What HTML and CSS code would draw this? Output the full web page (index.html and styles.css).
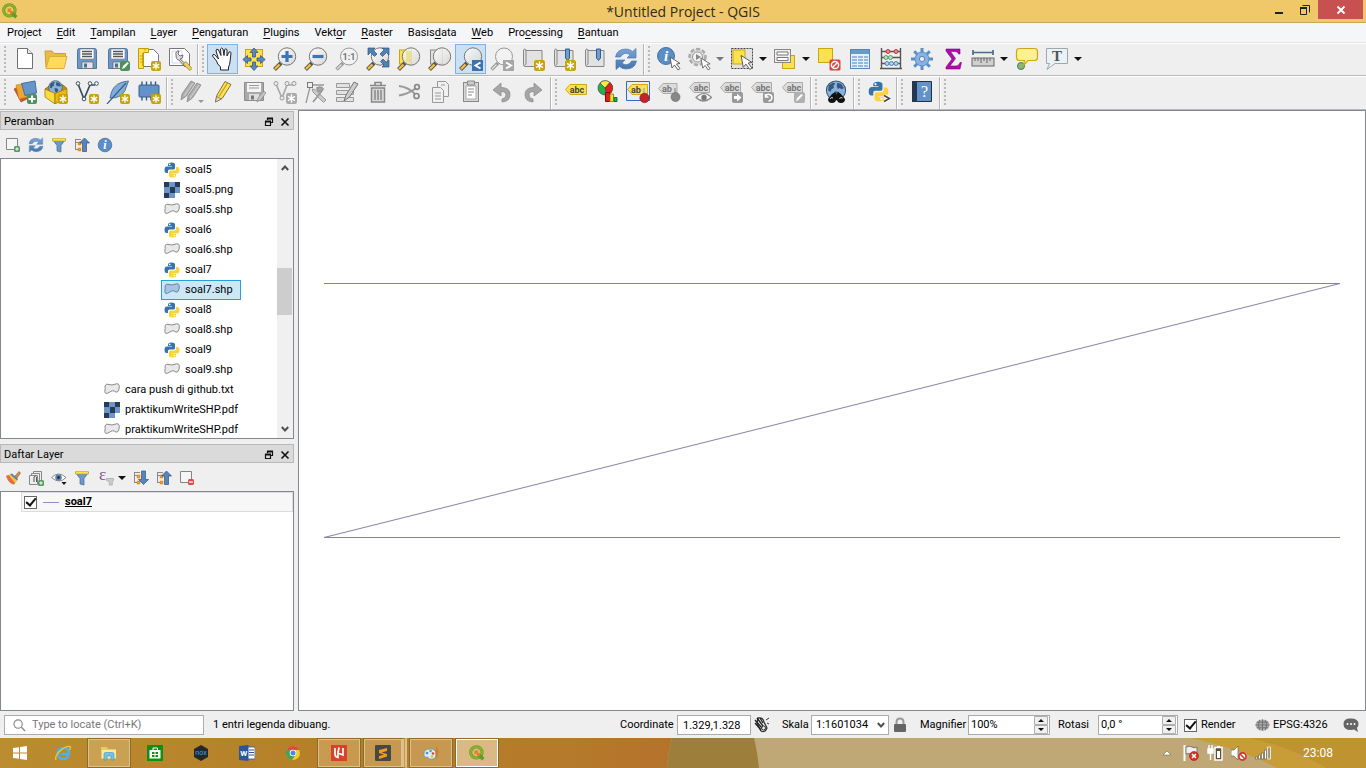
FILE: index.html
```html
<!DOCTYPE html>
<html lang="id">
<head>
<meta charset="utf-8">
<title>*Untitled Project - QGIS</title>
<link rel="stylesheet" href="styles.css">
</head>
<body>
<svg class="paints" aria-hidden="true">
<defs>
<linearGradient id="gGlass" x1="0" y1="0" x2="1" y2="1"><stop offset="0" stop-color="#ffffff"/><stop offset="1" stop-color="#d4d4d0"/></linearGradient>
<linearGradient id="gBlue" x1="0" y1="0" x2="0" y2="1"><stop offset="0" stop-color="#7fa6d3"/><stop offset="1" stop-color="#4274ae"/></linearGradient>
<linearGradient id="gTask" x1="0" y1="0" x2="1" y2="0"><stop offset="0" stop-color="#bb8c30"/><stop offset="0.5" stop-color="#b57f27"/><stop offset="0.85" stop-color="#b57a2b"/><stop offset="1" stop-color="#b5722b"/></linearGradient>
</defs>
</svg>
<svg class="symbols" aria-hidden="true">
<symbol id="star" viewBox="0 0 10 10"><rect width="10" height="10" rx="2" fill="#c8a20a"/><path d="M5 1.200v7.600M1.800 3.100l6.400 3.800M8.200 3.100L1.800 6.900" stroke="#fff" stroke-width="1.300"/></symbol>
<symbol id="starg" viewBox="0 0 10 10"><rect width="10" height="10" rx="2" fill="#a9a9a9"/><path d="M5 1.200v7.600M1.800 3.100l6.400 3.800M8.200 3.100L1.800 6.900" stroke="#fff" stroke-width="1.300"/></symbol>
<symbol id="qgis" viewBox="0 0 16 16"><circle cx="7.400" cy="7.400" r="5.700" fill="none" stroke="#6a9a1f" stroke-width="3"/><circle cx="7.400" cy="7.400" r="5.700" fill="none" stroke="#8dbb2e" stroke-width="1.400"/><path d="M8 8l3 .5 4.500 4.600-2.400 2.400L8.500 11z" fill="#5f9a30"/><path d="M5.600 5.600h4.200L8.500 7l3 3-1.400 1.400-3-3-1.500 1.400z" fill="#ee7c21"/></symbol>
<symbol id="new" viewBox="0 0 24 24"><path d="M4.500 1.500h10l5 5v15h-15z" fill="#fff" stroke="#707070"/><path d="M14.500 1.500v5h5" fill="#e8e8e8" stroke="#707070"/></symbol>
<symbol id="open" viewBox="0 0 24 24"><path d="M2 20.500L1 4h7l2 2.500h11.500v4" fill="#e8bd45" stroke="#c9a02f"/><path d="M2 21.500L5.500 9.500H23L20 21.500z" fill="#fdd95c" stroke="#d9ae3a"/></symbol>
<symbol id="floppy" viewBox="0 0 24 24"><path d="M2.500 3.500q0-2 2-2h15q2 0 2 2v18h-19z" fill="#6d97c9" stroke="#4f779f"/><path d="M5 2h14v10H5z" fill="#fff" stroke="#727d89" stroke-width=".6"/><path d="M7 4.500h10M7 7h10M7 9.500h10" stroke="#555" stroke-width="1.300"/><path d="M7 15h11v6.500H7z" fill="#e4e4e4" stroke="#555" stroke-width=".6"/><path d="M9 16.500h3v4H9z" fill="#4b6f99"/></symbol>
<symbol id="floppyg" viewBox="0 0 24 24"><path d="M2.500 2.500h19v18h-19z" fill="#a9a9a9" stroke="#8c8c8c"/><path d="M5 3h14v9H5z" fill="#f4f4f4"/><path d="M7 5.500h10M7 8h10" stroke="#999"/><path d="M7 14h10v6H7z" fill="#ddd"/><path d="M9 15.500h3v4H9z" fill="#777"/><path d="M15 22l1-4 6-7 2 2-5.500 7z" fill="#c4c4c4" stroke="#888" stroke-width=".7"/></symbol>
<symbol id="saveas" viewBox="0 0 24 24"><use href="#floppy"/><rect x="14" y="14" width="10" height="10" rx="2" fill="#4c9258"/><path d="M16 22l1-3 4.500-4 1.300 1.200L18.500 21z" fill="#fff"/></symbol>
<symbol id="layout" viewBox="0 0 24 24"><path d="M5.500 2.500h11l5 5v12h-16z" fill="#fff" stroke="#767676"/><path d="M1.500 1.500h10v4h-5v16h-5z" fill="#fbe259" stroke="#c59a05"/><path d="M5.500 6v13M3 9h3M3 12h3M3 15h3M8 2v2" stroke="#c59a05" stroke-width=".8"/><use href="#star" x="14" y="14" width="10" height="10"/></symbol>
<symbol id="layman" viewBox="0 0 24 24"><path d="M1.500 1.500h15l5 5v12h-20z" fill="#fff" stroke="#767676"/><path d="M4 4h10v12H4z" fill="#fff" stroke="#c8c8f0" stroke-width=".8"/><path d="M8 8q-1-4 3-4l-1 3 2 2 3-1q0 4-3 4l7 6-2 2-6-7q-3 0-3-5z" fill="#ddd" stroke="#555" stroke-width=".8"/><path d="M15 17l3-2.500 6 7-2 2z" fill="#ecd060" stroke="#9c8020" stroke-width=".8"/></symbol>
<symbol id="hand" viewBox="0 0 24 24"><path d="M9.500 23v-3Q6 17 5.500 14L1.500 9q0-2 2-1.500l4 4.500L5 4q0-2.500 2.300-1.500L10 8.500 9.500 2q1-2 2.500 0l1 6.500.700-6q1.300-1.500 2.300.2L16 9l2-4q1.600-.8 2 .8L19 15q-.3 3-1.500 5v3z" fill="#fff" stroke="#222"/></symbol>
<symbol id="pansel" viewBox="0 0 24 24"><rect x="3.500" y="2.500" width="17" height="17" fill="#fbe24c" stroke="#caa60c"/><g fill="#5c88bd" stroke="#36587f" stroke-width=".8"><path d="M12 1l4 4.500h-2.500V10h-3V5.500H8zM12 23.500l4-4.500h-2.500v-4h-3v4H8zM.800 12.500l4.700-4V11H9v3H5.500v2.500zM23.200 12.500l-4.700-4V11H15v3h3.500v2.500z"/></g></symbol>
<symbol id="glass" viewBox="0 0 24 24"><path d="M1.500 22.500l6.500-6.500" stroke="#555" stroke-width="4"/><path d="M2 22l4.500-4.500" stroke="#f6c12c" stroke-width="2.400"/><circle cx="14" cy="9.500" r="8.700" fill="url(#gGlass)" fill-opacity=".85" stroke="#777"/></symbol>
<symbol id="glassg" viewBox="0 0 24 24"><path d="M1.500 22.500l6.500-6.500" stroke="#999" stroke-width="3.500"/><path d="M2 22l4.500-4.500" stroke="#ddd" stroke-width="1.500"/><circle cx="14" cy="9.500" r="8.500" fill="#f2f2f2" stroke="#999"/></symbol>
<symbol id="zin" viewBox="0 0 24 24"><use href="#glass"/><path d="M14 4v11M8.500 9.500h11" stroke="#3f75b4" stroke-width="3.200"/></symbol>
<symbol id="zout" viewBox="0 0 24 24"><use href="#glass"/><path d="M8.500 9.500h11" stroke="#3f75b4" stroke-width="3.200"/></symbol>
<symbol id="znat" viewBox="0 0 24 24"><use href="#glassg"/><text x="14" y="13" font-size="9" font-weight="bold" text-anchor="middle" fill="#777">1:1</text></symbol>
<symbol id="zfull" viewBox="0 0 24 24"><use href="#glass"/><path d="M2 1h7L7 3l4 4-2.500 2.500-4-4L2 8zM23 1h-7l2 2-4 4 2.500 2.500 4-4L23 8zM23 20h-7l2-2-3.500-3.500L17 12l3.500 3.500 2.500-2.500z" fill="#4f80b8" stroke="#2f537f" stroke-width=".7"/></symbol>
<symbol id="zsel" viewBox="0 0 24 24"><rect x="2.500" y="3" width="12" height="14" fill="#fbe24c" stroke="#caa60c"/><use href="#glass"/><rect x="9" y="4" width="6" height="11" fill="#e8db85" opacity=".7"/></symbol>
<symbol id="zlay" viewBox="0 0 24 24"><rect x="2.500" y="3" width="12" height="14" fill="#e2e2e2" stroke="#888"/><use href="#glass"/></symbol>
<symbol id="zlast" viewBox="0 0 24 24"><use href="#glass"/><rect x="13" y="13" width="11" height="11" fill="#3e71ad"/><path d="M21.500 15.500l-5 3 5 3" fill="none" stroke="#fff" stroke-width="2"/></symbol>
<symbol id="znext" viewBox="0 0 24 24"><use href="#glassg"/><rect x="13" y="13" width="11" height="11" fill="#a6a6a6"/><path d="M16 15.500l5 3-5 3" fill="none" stroke="#fff" stroke-width="2"/></symbol>
<symbol id="map" viewBox="0 0 24 24"><path d="M5 3.500h16v16H4q-1.500 0-1.500-2V4q0-2 1.300-2T5 4v12q0 2-1.500 2" fill="#e2e2e2" stroke="#868686"/></symbol>
<symbol id="mapnew" viewBox="0 0 24 24"><use href="#map"/><use href="#star" x="13" y="13" width="11" height="11"/></symbol>
<symbol id="bmnew" viewBox="0 0 24 24"><use href="#map"/><path d="M13.500 2h4v9l-2 2.500-2-2.500z" fill="#6f9dd0" stroke="#2f5f96"/><use href="#star" x="13" y="13" width="11" height="11"/></symbol>
<symbol id="bm" viewBox="0 0 24 24"><use href="#map"/><path d="M13.500 2h4v9l-2 2.500-2-2.500z" fill="#6f9dd0" stroke="#2f5f96"/></symbol>
<symbol id="refresh" viewBox="0 0 24 24"><path d="M1.500 10Q3 2 12 2q4 0 6.500 2.500L22 1.500V11h-9l3-3q-4-3.500-8 0-1 1-1.500 2zM22.500 14Q21 22 12 22q-4 0-6.500-2.500L2 22.500V13h9l-3 3q4 3.500 8 0 1-1 1.500-2z" fill="url(#gBlue)" stroke="#4a7cb5" stroke-width=".7"/></symbol>
<symbol id="cursor" viewBox="0 0 12 15"><path d="M1 1l2 11 2.500-3 3.500 5 2-1.500L7.500 8l3.500-.6z" fill="#fff" stroke="#555" stroke-width=".9"/></symbol>
<symbol id="info" viewBox="0 0 16 16"><circle cx="8" cy="8" r="6.800" fill="#5b8ec6" stroke="#39679b" stroke-width=".7"/><text x="8" y="12" text-anchor="middle" font-family="Liberation Serif,serif" font-style="italic" font-weight="bold" font-size="12" fill="#fff">i</text></symbol>
<symbol id="ident" viewBox="0 0 24 24"><use href="#info" x="-1" y="-1" width="20" height="20"/><use href="#cursor" x="12" y="9" width="12" height="15"/></symbol>
<symbol id="actiong" viewBox="0 0 24 24"><circle cx="10.500" cy="10" r="8" fill="#d8d8d8" stroke="#aaa" stroke-width="2.500" stroke-dasharray="4 2"/><circle cx="10.500" cy="10" r="5" fill="#f2f2f2" stroke="#999"/><path d="M9 7l5 3-5 3z" fill="#888"/><use href="#cursor" x="13" y="10" width="11" height="14"/></symbol>
<symbol id="select" viewBox="0 0 24 24"><rect x="1.500" y="1.500" width="21" height="20" fill="#e2e2e2" stroke="#444" stroke-dasharray="2 1"/><rect x="3" y="3" width="12" height="14" fill="#fbe24c" stroke="#caa60c"/><use href="#cursor" x="10" y="7" width="13" height="17"/></symbol>
<symbol id="selform" viewBox="0 0 24 24"><rect x="9.500" y="8.500" width="12" height="13" fill="#fbe24c" stroke="#caa60c"/><rect x="1.500" y="2.500" width="16" height="13" fill="#eee" stroke="#888"/><path d="M4 5h11v3H4zM4 10.500h11v3H4z" fill="#fff" stroke="#777"/></symbol>
<symbol id="desel" viewBox="0 0 24 24"><rect x="1.500" y="1.500" width="14" height="14" fill="#fbe24c" stroke="#caa60c"/><rect x="12.500" y="12.500" width="11" height="11" rx="1.500" fill="#dd3f42"/><circle cx="18" cy="18" r="3.600" fill="none" stroke="#fff" stroke-width="1.500"/><path d="M15.500 20.500l5-5" stroke="#fff" stroke-width="1.500"/></symbol>
<symbol id="table" viewBox="0 0 24 24"><rect x="2.500" y="2.500" width="19" height="19" fill="#e6f0fa" stroke="#5585be"/><path d="M3 3h18v4H3z" fill="#6898cf"/><path d="M4 10h5M4 13h5M4 16h5M4 19h5M10 10h5M10 13h5M10 16h5M10 19h5M16 10h4M16 13h4M16 16h4M16 19h4" stroke="#7ba5d6" stroke-width="1.400"/></symbol>
<symbol id="abacus" viewBox="0 0 24 24"><path d="M2.500 1v21M21.500 1v21M2 4.500h20M2 10.500h20M2 16.500h20M1 21.500h22" stroke="#555" stroke-width="1.400"/><g fill="#e28989" stroke="#c03636"><circle cx="9" cy="4.500" r="2"/><circle cx="17" cy="4.500" r="2"/></g><g fill="#b9e0c2" stroke="#55a068"><circle cx="7" cy="10.500" r="2"/><circle cx="11.500" cy="10.500" r="2"/></g><g fill="#b5d5ec" stroke="#4a82b5"><circle cx="8" cy="16.500" r="2"/><circle cx="12.500" cy="16.500" r="2"/><circle cx="17" cy="16.500" r="2"/></g></symbol>
<symbol id="gear" viewBox="0 0 24 24"><g stroke="#5b8fca" stroke-width="3"><path d="M12 1v22M1 12h22M4.200 4.200l15.600 15.600M19.800 4.200L4.200 19.800"/></g><circle cx="12" cy="12" r="7" fill="#8ab2e0" stroke="#5b8fca"/><circle cx="12" cy="12" r="2.600" fill="#efefef" stroke="#4f85c4"/></symbol>
<symbol id="sigma" viewBox="0 0 24 24"><path d="M5 2h14v5h-1.500Q17 4.500 14 4.500H9.500l5 7-5.500 7.500h6q3 0 4-3.500h1.500L19 22H5v-2l6-8L5 4z" fill="#ab0eab" stroke="#7d087d" stroke-width=".6"/></symbol>
<symbol id="measure" viewBox="0 0 24 24"><path d="M2 5.500h20M2 3v5M22 3v5" stroke="#48688f" stroke-width="1.700"/><rect x="1" y="11" width="22" height="8" fill="#d0d0d0" stroke="#666"/><path d="M4 11v3M7 11v3M10 11v5M13 11v3M16 11v5M19 11v3" stroke="#666"/></symbol>
<symbol id="tip" viewBox="0 0 24 24"><circle cx="6" cy="19" r="3.500" fill="#7eb98b" stroke="#4a7e57"/><path d="M4.500 1.500h15q3 0 3 3v6q0 3-3 3H13L8 19l1.500-5.500h-5q-3 0-3-3v-6q0-3 3-3z" fill="#fcf091" stroke="#d0a712" stroke-width="1.200"/></symbol>
<symbol id="anno" viewBox="0 0 24 24"><path d="M1.500 1.500h21v15H10l-8 6 2.500-6h-3z" fill="#eaf2f7" stroke="#9da7ac"/><text x="12" y="14" text-anchor="middle" font-family="Liberation Serif,serif" font-weight="bold" font-size="15" fill="#555">T</text></symbol>
<symbol id="layers" viewBox="0 0 24 24"><path d="M1 9l9-5 8 13-10 5z" fill="#c9562a" stroke="#9a431f" stroke-width=".6"/><path d="M3 5l12-2 3 13-12 3z" fill="#eda72e" stroke="#c98717" stroke-width=".6"/><path d="M8.500 3.500L22 1l1.500 12L12 15.500z" fill="#6695cb" stroke="#456f9f"/><rect x="14" y="14" width="10" height="10" rx="2" fill="#4c9258"/><path d="M19 15.500v7M15.500 19h7" stroke="#fff" stroke-width="2"/></symbol>
<symbol id="globe" viewBox="0 0 16 16"><circle cx="8" cy="8" r="7.300" fill="#8cb2da" stroke="#34567f" stroke-width=".8"/><path d="M2.500 4l3-2 2 .5-1.500 2 .5 1.500-2 1-.5 2-2-1zM9 2l3 1 2 3-1.500 1-2-1-1 1-1-2.500zM7 8.500l3 .5 1 2-2 3-1.500-2z" fill="#35587f"/></symbol>
<symbol id="geopkg" viewBox="0 0 24 24"><path d="M1 9l6-4h12l4 3.500L12 14z" fill="#c4950a" stroke="#8f6f0e"/><use href="#globe" x="4" y="0" width="15" height="15"/><path d="M1 9l10 4.500V24L1 17z" fill="#fbdc3d" stroke="#9a7a12" stroke-width=".8"/><path d="M11 13.500L23 8.500v9L11 24z" fill="#edb70d" stroke="#9a7a12" stroke-width=".8"/><use href="#star" x="14" y="14" width="10" height="10"/></symbol>
<symbol id="vec" viewBox="0 0 24 24"><path d="M3 4l6 15 6-14h5" fill="none" stroke="#3b4c60" stroke-width="1.700"/><g fill="#fff" stroke="#3b4c60"><circle cx="3" cy="3.500" r="1.800"/><circle cx="9" cy="19" r="1.800"/><circle cx="15" cy="3.500" r="1.800"/><circle cx="21.500" cy="3.500" r="1.800"/></g></symbol>
<symbol id="newvec" viewBox="0 0 24 24"><use href="#vec"/><use href="#star" x="14" y="14" width="10" height="10"/></symbol>
<symbol id="feather" viewBox="0 0 24 24"><path d="M22.500 1Q9 2 5.500 12L4 18q11 .5 15-7.500z" fill="#83acd9" stroke="#34618f" stroke-width=".8"/><path d="M1 24L20 3" stroke="#34618f" stroke-width="1.200"/></symbol>
<symbol id="spatial" viewBox="0 0 24 24"><use href="#feather"/><use href="#star" x="14" y="14" width="10" height="10"/></symbol>
<symbol id="chip" viewBox="0 0 24 24"><path d="M5 1.500v19M9.500 1.500v19M14 1.500v19M18.500 1.500v19" stroke="#335a8c" stroke-width="1.400"/><rect x="2" y="5" width="20" height="12" rx="1" fill="#6391c9" stroke="#395f90"/><use href="#star" x="14" y="14" width="10" height="10"/></symbol>
<symbol id="pensg" viewBox="0 0 24 24"><g fill="#ababab" stroke="#8a8a8a" stroke-width=".8"><path d="M1 20l1-6L11 1l4 2-8.500 13z"/><path d="M7 22l1-6L17 3l4 2-8.500 13z"/></g><path d="M4 16l9-13M10 18l9-13" stroke="#ccc" stroke-width="1.300"/><path d="M18 20h6l-3 3z" fill="#999"/></symbol>
<symbol id="pencil" viewBox="0 0 24 24"><path d="M4.500 22l1.500-7L14 1.500l6 3L11.500 18z" fill="#fbe259" stroke="#84742a"/><path d="M8 16.500L16.500 3" stroke="#c6a323" stroke-width="1.400"/><path d="M4.500 22l1-5.500 5 2.500z" fill="#eed7aa" stroke="#666" stroke-width=".7"/></symbol>
<symbol id="vecg" viewBox="0 0 24 24"><path d="M3 4l6 14 5-13h6" fill="none" stroke="#aaa" stroke-width="1.700"/><g fill="#eee" stroke="#999"><circle cx="3" cy="3.500" r="2"/><circle cx="9" cy="18" r="2"/><circle cx="14" cy="3.500" r="2"/><circle cx="21" cy="3.500" r="2"/></g><use href="#starg" x="13" y="13" width="11" height="11"/></symbol>
<symbol id="vertg" viewBox="0 0 24 24"><path d="M6 7L2 23M8 5h12" stroke="#999" stroke-width="1.300"/><rect x="3.500" y="2.500" width="5" height="5" fill="#eee" stroke="#777"/><path d="M8 9l3 .5L22 20l-2.500 2.500L9 12z" fill="#ccc" stroke="#999"/><path d="M13 8q4-2 6 1l-2 3-3-1zM17 12L9 22" fill="#aaa" stroke="#999" stroke-width="1.800"/></symbol>
<symbol id="multig" viewBox="0 0 24 24"><g fill="#e2e2e2" stroke="#999"><path d="M1.500 3.500h13v4h-13zM1.500 10.500h17v4h-17zM1.500 17.500h17v4h-17z"/></g><path d="M9 21l2-6 8-13 4 2-8.500 13z" fill="#ccc" stroke="#777"/></symbol>
<symbol id="trash" viewBox="0 0 24 24"><path d="M4 5.500h16M9 5V2.500h6V5" fill="none" stroke="#888" stroke-width="1.600"/><path d="M5.500 8h13v14h-13z" fill="#d8d8d8" stroke="#888" stroke-width="1.500"/><path d="M9 10v10M12 10v10M15 10v10" stroke="#888" stroke-width="1.500"/></symbol>
<symbol id="cut" viewBox="0 0 24 24"><path d="M2 6q9 1 16 8M2 15.500Q11 14 18.500 8.500" fill="none" stroke="#999" stroke-width="2"/><g fill="none" stroke="#888" stroke-width="1.700"><circle cx="20" cy="7" r="2.300"/><circle cx="19.500" cy="16" r="2.500"/></g></symbol>
<symbol id="copy" viewBox="0 0 24 24"><g fill="#f0f0f0" stroke="#999"><path d="M9.500 1.500h8l3 3v12h-11z"/><path d="M4.500 7.500h8l3 3v12h-11z"/></g><path d="M7 13h6M7 16h6M7 19h6M13 5h4" stroke="#999"/></symbol>
<symbol id="paste" viewBox="0 0 24 24"><rect x="4.500" y="2.500" width="15" height="19" fill="#d6d6d6" stroke="#888"/><path d="M7 6h10v13H7z" fill="#fff" stroke="#aaa"/><path d="M8.500 1h7v4h-7z" fill="#ccc" stroke="#888"/><path d="M9 9h6M9 12h6M9 15h4" stroke="#888"/></symbol>
<symbol id="undo" viewBox="0 0 24 24"><path d="M3 10l8-7v4.500q9 0 9 7T12 22v-3q4-.5 4-4t-5-3.500V16z" fill="#a6a6a6" stroke="#8e8e8e" stroke-width=".8"/></symbol>
<symbol id="redo" viewBox="0 0 24 24"><path d="M21 10l-8-7v4.500q-9 0-9 7T12 22v-3q-4-.5-4-4t5-3.500V16z" fill="#a6a6a6" stroke="#8e8e8e" stroke-width=".8"/></symbol>
<symbol id="tag" viewBox="0 0 24 24"><path d="M1.500 9.500L6 4.500h16.500v10H6z" fill="#fbe24c" stroke="#d4a70e"/><text x="13" y="12.500" text-anchor="middle" font-size="9" font-weight="bold" fill="#444">abc</text></symbol>
<symbol id="tagg" viewBox="0 0 24 24"><path d="M1.500 7.500L6 2.500h15.500v10H6z" fill="#dcdcdc" stroke="#aaa"/><text x="13" y="10.500" text-anchor="middle" font-size="9" font-weight="bold" fill="#777">abc</text></symbol>
<symbol id="diag" viewBox="0 0 24 24"><circle cx="10" cy="8" r="7" fill="#25b04c" stroke="#454545" stroke-width=".7"/><path d="M10 8L5 3a7 7 0 0 1 10-.5z" fill="#f9ed3b" stroke="#454545" stroke-width=".7"/><path d="M10 8l5-5.500A7 7 0 0 1 12 15z" fill="#e01f1f" stroke="#454545" stroke-width=".7"/><path d="M10.500 12.500h4v9h-4z" fill="#e01f1f" stroke="#900"/><path d="M15 14h3.500v7.500H15z" fill="#f9dd3b" stroke="#a80"/><path d="M19 17.500h3v4h-3z" fill="#25b04c" stroke="#073"/></symbol>
<symbol id="pinl" viewBox="0 0 24 24"><path d="M.500 1.500h23v19H.500z" fill="#e9eef5" stroke="#2c6bd0"/><path d="M1.500 9.500L6 4.500h15.500v10H6z" fill="#fbe24c" stroke="#d4a70e"/><text x="10" y="12.500" text-anchor="middle" font-size="9" font-weight="bold" fill="#444">ab</text><path d="M18 8v9" stroke="#b9b9b9" stroke-width="2"/><circle cx="18.500" cy="18" r="4.700" fill="#c22525" stroke="#8b1212" stroke-width=".6"/></symbol>
<symbol id="ping" viewBox="0 0 24 24"><path d="M1.500 8.500L6 3.500h14v10H6z" fill="#dcdcdc" stroke="#aaa"/><text x="10" y="11.500" text-anchor="middle" font-size="9" font-weight="bold" fill="#777">ab</text><path d="M18 8v9" stroke="#aaa" stroke-width="2"/><circle cx="18.500" cy="17" r="4.500" fill="#888" stroke="#666" stroke-width=".6"/></symbol>
<symbol id="eyeg" viewBox="0 0 24 24"><use href="#tagg"/><path d="M8 17.500q8-8 15.500 0-8 7-15.500 0z" fill="#f4f4f4" stroke="#888" stroke-width="1.200"/><circle cx="16" cy="17.500" r="2.700" fill="#777"/></symbol>
<symbol id="moveg" viewBox="0 0 24 24"><use href="#tagg"/><rect x="13" y="12" width="11" height="11" rx="2" fill="#999"/><path d="M15 16h3v-2.500l4.500 4-4.500 4V19h-3z" fill="#fff"/></symbol>
<symbol id="rotg" viewBox="0 0 24 24"><use href="#tagg"/><rect x="13" y="12" width="11" height="11" rx="2" fill="#999"/><path d="M18.500 21a3.300 3.300 0 1 0-3-4.500M15.500 14v3h3" fill="none" stroke="#fff" stroke-width="1.500"/></symbol>
<symbol id="editg" viewBox="0 0 24 24"><use href="#tagg"/><rect x="13" y="12" width="11" height="11" rx="2" fill="#b0b0b0"/><path d="M15 21l1-3 4.500-4 1.300 1.200L17.500 20z" fill="#fff"/></symbol>
<symbol id="find" viewBox="0 0 24 24"><use href="#globe" x="0" y="0" width="24" height="21"/><path d="M8 14l3-2 1.500 3L14 12l3 2 4 5q0 4-4 4-3.500 0-4-3h-1q-.5 3-4 3-4 0-4-4z" fill="#111"/><path d="M6 19a2 2 0 0 1 3-1M15.500 19a2 2 0 0 1 3-1" stroke="#ddd" fill="none"/></symbol>
<symbol id="py" viewBox="0 0 16 16"><path d="M4 4V2.500Q4 .500 7.500.500T11 2.500V6Q11 7.500 9.500 7.500h-4Q4 7.500 4 9v2H2.500Q.500 11 .500 7.800T3 4.500h5V4z" fill="#3674a8"/><path d="M12 12v1.500q0 2-3.500 2T5 13.500V10q0-1.500 1.500-1.500h4Q12 8.500 12 7V5h1.500q2 0 2 3.200T13 11.500H8v.5z" fill="#fcd33c"/><circle cx="5.700" cy="2.400" r=".8" fill="#fff"/><circle cx="10.200" cy="13.600" r=".8" fill="#fff"/></symbol>
<symbol id="pycon" viewBox="0 0 24 24"><use href="#py" x="1" y="1" width="21" height="21"/><path d="M17 15.500l5.500 3-5.500 3" fill="none" stroke="#fff" stroke-width="3"/><path d="M17 15.500l5.500 3-5.500 3" fill="none" stroke="#444" stroke-width="1.500"/></symbol>
<symbol id="help" viewBox="0 0 24 24"><path d="M2.500 1.500h19v20h-19z" fill="#6391c9" stroke="#25303d"/><path d="M2 1h5v21H2z" fill="#25384f"/><text x="14.500" y="17" text-anchor="middle" font-family="Liberation Serif,serif" font-size="16" fill="#fff">?</text></symbol>
<symbol id="addl" viewBox="0 0 16 16"><path d="M1.500 1.500h11v11h-11z" fill="#f6f6f6" stroke="#858585"/><rect x="9" y="9" width="6" height="6" rx="1.500" fill="#579a64"/><path d="M12 10.300v3.400M10.300 12h3.400" stroke="#fff"/></symbol>
<symbol id="reml" viewBox="0 0 16 16"><path d="M1.500 1.500h11v11h-11z" fill="#f6f6f6" stroke="#858585"/><rect x="9" y="9" width="6" height="6" rx="1.500" fill="#e8484a"/><path d="M10 12h4" stroke="#fff" stroke-width="1.300"/></symbol>
<symbol id="funnel" viewBox="0 0 16 16"><path d="M1.500 2.500h13l-4.500 6V15l-4-1V8.500z" fill="#6d98c9" stroke="#426c9d" stroke-width=".7"/><path d="M1.500 1.500h13v2.500h-13z" fill="#fbe24c" stroke="#bd9d16" stroke-width=".6"/></symbol>
<symbol id="treeb" viewBox="0 0 16 16"><path d="M1.500 2v11M1.500 5.500h4M1.500 12.500h4" stroke="#888" fill="none"/><path d="M1 2.500h6" stroke="#888"/><path d="M4.500 5.500h2v2h-2zM4.500 11.500h2v2h-2z" fill="#fff" stroke="#e98b17" stroke-width="1.400"/></symbol>
<symbol id="collapse" viewBox="0 0 16 16"><use href="#treeb"/><path d="M10.500 1l5 5h-3v8.500h-4V6h-3z" fill="#5685bc" stroke="#2d5482" stroke-width=".7"/></symbol>
<symbol id="expand" viewBox="0 0 16 16"><use href="#treeb"/><path d="M10.500 14.500l5-5h-3V1h-4v8.500h-3z" fill="#5685bc" stroke="#2d5482" stroke-width=".7"/></symbol>
<symbol id="brush" viewBox="0 0 16 16"><path d="M1 6l6-2.500 6 5.500-3.500 5.500Q5 15 1 6z" fill="#f0c53b"/><path d="M1 6l2.500-1 6.500 8-1 1.500Q4 14 1 6z" fill="#e46a48"/><path d="M5 4.300L7 3.500l6 5.500-1 1.500z" fill="#5685bc"/><path d="M10 6l4-4.500 1.500 1.500L12 8z" fill="#cb8b4f" stroke="#9a5b24" stroke-width=".6"/></symbol>
<symbol id="group" viewBox="0 0 16 16"><g fill="#eee" stroke="#888"><path d="M5.500 1.500h8v10h-8z"/><path d="M3.500 3.500h8v10h-8z"/><path d="M1.500 5.500h8v9h-8z"/></g><path d="M6 12V7q1.500-2 2.500 0v5" fill="none" stroke="#555"/><rect x="10" y="10" width="6" height="6" rx="1.500" fill="#579a64"/><path d="M13 11.300v3.400M11.300 13h3.400" stroke="#fff"/></symbol>
<symbol id="eye" viewBox="0 0 16 16"><path d="M.500 7.500q7-7 14.500 0-7 7-14.500 0z" fill="#fff" stroke="#8c8c8c"/><circle cx="7.500" cy="7.500" r="3.300" fill="#5a82ad"/><circle cx="7.500" cy="7.500" r="1.300" fill="#223"/><path d="M10.500 12h5L13 15z" fill="#111"/></symbol>
<symbol id="epsilon" viewBox="0 0 16 16"><text x="4.500" y="10" text-anchor="middle" font-size="17" font-family="Liberation Serif,serif" fill="#82508c">ε</text><path d="M8.500 8.500h7v2l-1.200 1V15h-3v-3.500l-2.800-1z" fill="#ccc" stroke="#aaa" stroke-width=".8"/></symbol>
<symbol id="raster" viewBox="0 0 16 16"><path d="M0 0h16v16H0z" fill="#6d95c7"/><path d="M0 0h5v5H0zM11 0h5v5h-5zM6 5h5v6H6zM0 11h5v5H0z" fill="#293b54"/><path d="M11 11h5v5h-5z" fill="#fff"/></symbol>
<symbol id="poly" viewBox="0 0 16 16"><path d="M1 4q1-3 4-1.500 3 1.200 6-.3 4-1.500 4.300 2Q15.500 7 14 9.500q-2 1.500-3.500-.3-2-1.500-5 1Q1 13 .800 9.500 1.500 6.500 1 4z" fill="#e9e9e9" stroke="#8a8a8a"/></symbol>
<symbol id="polys" viewBox="0 0 16 16"><path d="M1 4q1-3 4-1.500 3 1.200 6-.3 4-1.500 4.300 2Q15.500 7 14 9.500q-2 1.500-3.500-.3-2-1.500-5 1Q1 13 .800 9.500 1.500 6.500 1 4z" fill="#a3c4e3" stroke="#6484a8"/></symbol>
<symbol id="float" viewBox="0 0 10 10"><path d="M3.500 3V1.500h5v4H7M1.500 4.500h5v4h-5z" fill="none" stroke="#111" stroke-width="1.200"/><path d="M3 1.500h6M1 4.500h6" stroke="#111" stroke-width="1.800"/></symbol>
<symbol id="close" viewBox="0 0 10 10"><path d="M1.500 1.500l7 7M8.500 1.500l-7 7" stroke="#111" stroke-width="1.600"/></symbol>
<symbol id="up" viewBox="0 0 8 8"><path d="M.800 6L4 2.500 7.200 6" fill="none" stroke="#505050" stroke-width="2"/></symbol>
<symbol id="down" viewBox="0 0 8 8"><path d="M.800 2L4 5.500 7.200 2" fill="none" stroke="#505050" stroke-width="2"/></symbol>
<symbol id="spin" viewBox="0 0 14 18"><path d="M.500.500h13v8H.500zM.500 9.500h13v8H.500z" fill="#f0f0f0" stroke="#b0b0b0"/><path d="M4 6h6L7 3zM4 12h6l-3 3z" fill="#111"/></symbol>
</svg>

<header class="titlebar">
  <svg class="i16"><use href="#qgis"/></svg>
  <h1>*Untitled Project - QGIS</h1>
  <div class="winbtns">
    <button class="wb" aria-label="Minimize"><svg viewBox="0 0 10 10"><path d="M1 8h8" stroke="#222" stroke-width="2"/></svg></button>
    <button class="wb" aria-label="Restore"><svg viewBox="0 0 10 10"><path d="M2.500.500h7v7M.500 3.500h6v6h-6z" fill="none" stroke="#222"/><path d="M0 3h7" stroke="#222" stroke-width="2"/></svg></button>
    <button class="wb wclose" aria-label="Close"><svg viewBox="0 0 10 10"><path d="M1.500 1.500l7 7M8.500 1.500l-7 7" stroke="#fff" stroke-width="1.800"/></svg></button>
  </div>
</header>
<nav class="menubar">
  <button>Pro<u>j</u>ect</button><button><u>E</u>dit</button><button><u>T</u>ampilan</button><button><u>L</u>ayer</button><button><u>P</u>engaturan</button><button><u>P</u>lugins</button><button>Vekt<u>o</u>r</button><button><u>R</u>aster</button><button>Basis<u>d</u>ata</button><button><u>W</u>eb</button><button>Pro<u>c</u>essing</button><button><u>B</u>antuan</button>
</nav>
<div class="toolrow">
  <div class="toolbar">
    <button aria-label="New"><svg><use href="#new"/></svg></button><button aria-label="Open"><svg><use href="#open"/></svg></button><button aria-label="Save"><svg><use href="#floppy"/></svg></button><button aria-label="Save as"><svg><use href="#saveas"/></svg></button><button aria-label="New layout"><svg><use href="#layout"/></svg></button><button aria-label="Layout manager"><svg><use href="#layman"/></svg></button>
  </div>
  <div class="toolbar">
    <button class="on" aria-label="Pan"><svg><use href="#hand"/></svg></button><button aria-label="Pan to selection"><svg><use href="#pansel"/></svg></button><button aria-label="Zoom in"><svg><use href="#zin"/></svg></button><button aria-label="Zoom out"><svg><use href="#zout"/></svg></button><button aria-label="Native resolution"><svg><use href="#znat"/></svg></button><button aria-label="Zoom full"><svg><use href="#zfull"/></svg></button><button aria-label="Zoom to selection"><svg><use href="#zsel"/></svg></button><button aria-label="Zoom to layer"><svg><use href="#zlay"/></svg></button><button class="on" aria-label="Zoom last"><svg><use href="#zlast"/></svg></button><button aria-label="Zoom next"><svg><use href="#znext"/></svg></button><button aria-label="New map view"><svg><use href="#mapnew"/></svg></button><button aria-label="New bookmark"><svg><use href="#bmnew"/></svg></button><button aria-label="Bookmarks"><svg><use href="#bm"/></svg></button><button aria-label="Refresh"><svg><use href="#refresh"/></svg></button>
  </div>
  <div class="toolbar last">
    <button aria-label="Identify"><svg><use href="#ident"/></svg></button><button class="drop dim" aria-label="Action"><svg><use href="#actiong"/></svg></button><button class="drop" aria-label="Select"><svg><use href="#select"/></svg></button><button class="drop" aria-label="Select by form"><svg><use href="#selform"/></svg></button><button aria-label="Deselect"><svg><use href="#desel"/></svg></button><button aria-label="Attribute table"><svg><use href="#table"/></svg></button><button aria-label="Field calculator"><svg><use href="#abacus"/></svg></button><button aria-label="Toolbox"><svg><use href="#gear"/></svg></button><button aria-label="Statistics"><svg><use href="#sigma"/></svg></button><button class="drop" aria-label="Measure"><svg><use href="#measure"/></svg></button><button aria-label="Map tips"><svg><use href="#tip"/></svg></button><button class="drop" aria-label="Annotation"><svg><use href="#anno"/></svg></button>
  </div>
</div>
<div class="toolrow">
  <div class="toolbar">
    <button aria-label="Data source"><svg><use href="#layers"/></svg></button><button aria-label="New GeoPackage"><svg><use href="#geopkg"/></svg></button><button aria-label="New shapefile"><svg><use href="#newvec"/></svg></button><button aria-label="New SpatiaLite"><svg><use href="#spatial"/></svg></button><button aria-label="New scratch layer"><svg><use href="#chip"/></svg></button>
  </div>
  <div class="toolbar">
    <button aria-label="Current edits"><svg><use href="#pensg"/></svg></button><button aria-label="Toggle editing"><svg><use href="#pencil"/></svg></button><button aria-label="Save edits"><svg><use href="#floppyg"/></svg></button><button aria-label="Add feature"><svg><use href="#vecg"/></svg></button><button aria-label="Vertex tool"><svg><use href="#vertg"/></svg></button><button aria-label="Modify attributes"><svg><use href="#multig"/></svg></button><button aria-label="Delete"><svg><use href="#trash"/></svg></button><button aria-label="Cut"><svg><use href="#cut"/></svg></button><button aria-label="Copy"><svg><use href="#copy"/></svg></button><button aria-label="Paste"><svg><use href="#paste"/></svg></button><button aria-label="Undo"><svg><use href="#undo"/></svg></button><button aria-label="Redo"><svg><use href="#redo"/></svg></button>
  </div>
  <div class="toolbar">
    <button aria-label="Labels"><svg><use href="#tag"/></svg></button><button aria-label="Diagrams"><svg><use href="#diag"/></svg></button><button aria-label="Highlight pinned"><svg><use href="#pinl"/></svg></button><button aria-label="Pin labels"><svg><use href="#ping"/></svg></button><button aria-label="Show labels"><svg><use href="#eyeg"/></svg></button><button aria-label="Move label"><svg><use href="#moveg"/></svg></button><button aria-label="Rotate label"><svg><use href="#rotg"/></svg></button><button aria-label="Change label"><svg><use href="#editg"/></svg></button>
  </div>
  <div class="toolbar"><button aria-label="MetaSearch"><svg><use href="#find"/></svg></button></div>
  <div class="toolbar"><button aria-label="Python console"><svg><use href="#pycon"/></svg></button></div>
  <div class="toolbar"><button aria-label="Help"><svg><use href="#help"/></svg></button></div>
  <div class="toolbar last"></div>
</div>

<main class="work">
  <div class="docks">
    <section class="dock browser">
      <h2>Peramban<button aria-label="Float"><svg><use href="#float"/></svg></button><button aria-label="Close"><svg><use href="#close"/></svg></button></h2>
      <div class="docktools">
        <button aria-label="Add layer"><svg><use href="#addl"/></svg></button><button aria-label="Refresh"><svg><use href="#refresh"/></svg></button><button aria-label="Filter"><svg><use href="#funnel"/></svg></button><button aria-label="Collapse all"><svg><use href="#collapse"/></svg></button><button aria-label="Properties"><svg><use href="#info"/></svg></button>
      </div>
      <div class="treebox">
        <ul class="tree">
          <li class="deep"><span><svg><use href="#py"/></svg>soal5</span></li>
          <li class="deep"><span><svg><use href="#raster"/></svg>soal5.png</span></li>
          <li class="deep"><span><svg><use href="#poly"/></svg>soal5.shp</span></li>
          <li class="deep"><span><svg><use href="#py"/></svg>soal6</span></li>
          <li class="deep"><span><svg><use href="#poly"/></svg>soal6.shp</span></li>
          <li class="deep"><span><svg><use href="#py"/></svg>soal7</span></li>
          <li class="deep"><span class="sel"><svg><use href="#polys"/></svg>soal7.shp</span></li>
          <li class="deep"><span><svg><use href="#py"/></svg>soal8</span></li>
          <li class="deep"><span><svg><use href="#poly"/></svg>soal8.shp</span></li>
          <li class="deep"><span><svg><use href="#py"/></svg>soal9</span></li>
          <li class="deep"><span><svg><use href="#poly"/></svg>soal9.shp</span></li>
          <li><span><svg><use href="#poly"/></svg>cara push di github.txt</span></li>
          <li><span><svg><use href="#raster"/></svg>praktikumWriteSHP.pdf</span></li>
          <li><span><svg><use href="#poly"/></svg>praktikumWriteSHP.pdf</span></li>
        </ul>
        <div class="scroll">
          <svg><use href="#up"/></svg><div class="track"><div class="thumb"></div></div><svg><use href="#down"/></svg>
        </div>
      </div>
    </section>
    <section class="dock legend">
      <h2>Daftar Layer<button aria-label="Float"><svg><use href="#float"/></svg></button><button aria-label="Close"><svg><use href="#close"/></svg></button></h2>
      <div class="docktools">
        <button aria-label="Styling"><svg><use href="#brush"/></svg></button><button aria-label="Add group"><svg><use href="#group"/></svg></button><button aria-label="Themes"><svg><use href="#eye"/></svg></button><button aria-label="Filter legend"><svg><use href="#funnel"/></svg></button><button class="drop" aria-label="Filter by expression"><svg><use href="#epsilon"/></svg></button><button aria-label="Expand all"><svg><use href="#expand"/></svg></button><button aria-label="Collapse all"><svg><use href="#collapse"/></svg></button><button aria-label="Remove layer"><svg><use href="#reml"/></svg></button>
      </div>
      <div class="layerbox">
        <label class="layer"><input type="checkbox" checked><span class="linesym"></span><b>soal7</b></label>
      </div>
    </section>
  </div>
  <div class="canvas">
    <svg viewBox="0 0 1066 599" role="img" aria-label="soal7"><path d="M25 172.500H1041L25 426.500H1041" fill="none" stroke="#877fab" stroke-linejoin="bevel"/></svg>
  </div>
</main>

<footer class="status">
  <label class="locate"><svg viewBox="0 0 14 14"><circle cx="5.500" cy="5.500" r="4.500" fill="none" stroke="#888" stroke-width="1.200"/><path d="M9 9l4 4" stroke="#888" stroke-width="1.500"/></svg><input type="text" placeholder="Type to locate (Ctrl+K)" aria-label="Type to locate"></label>
  <span class="msg">1 entri legenda dibuang.</span>
  <label class="w-coordl" for="coord">Coordinate</label>
  <input id="coord" class="box w-coord" value="1.329,1.328">
  <button class="extents" aria-label="Toggle extents"><svg viewBox="0 0 16 16"><path d="M4 1q5-1 6 4l3 6q-2 5-6 3l-4-8z" fill="#eee" stroke="#333" stroke-width="1.300"/><path d="M1 3l7 8M3 1l6 8M6 1l3 5M1 6l6 7" stroke="#222" stroke-width="1.300"/><circle cx="9.500" cy="11" r="2" fill="none" stroke="#333"/><path d="M12 3l3-2M13 6l2 1" stroke="#333"/></svg></button>
  <label class="w-scalel" for="scale">Skala</label>
  <span class="combo"><select id="scale" class="box"><option>1:1601034</option></select><svg><use href="#down"/></svg></span>
  <button class="lock" aria-label="Lock scale"><svg viewBox="0 0 12 16"><path d="M2.500 7V5Q2.500 1.500 6 1.500T9.500 5v2" fill="none" stroke="#999" stroke-width="2"/><rect y="7" width="12" height="8" rx="1" fill="#666"/></svg></button>
  <label class="w-magl" for="mag">Magnifier</label>
  <span class="spinbox w-mag"><input id="mag" value="100%"><svg><use href="#spin"/></svg></span>
  <label class="w-rotl" for="rot">Rotasi</label>
  <span class="spinbox w-rot"><input id="rot" value="0,0 °"><svg><use href="#spin"/></svg></span>
  <label class="render"><input type="checkbox" checked>Render</label>
  <button class="crs"><svg viewBox="0 0 16 16"><ellipse cx="8" cy="8" rx="7.500" ry="6" fill="#aaa"/><path d="M.500 8h15M2 5h12M2 11h12M8 2v12M5 2.500q-3 5.500 0 11M11 2.500q3 5.500 0 11" fill="none" stroke="#666" stroke-width=".8"/></svg>EPSG:4326</button>
  <button class="bubble" aria-label="Messages"><svg viewBox="0 0 16 16"><path d="M8 1.500q7.500 0 7.500 5.500 0 2.500-1.500 4l1 4-4-2.500-3 .5Q.500 13 .500 7T8 1.500z" fill="#666"/><circle cx="4.500" cy="7" r="1" fill="#fff"/><circle cx="8" cy="7" r="1" fill="#fff"/><circle cx="11.500" cy="7" r="1" fill="#fff"/></svg></button>
</footer>

<footer class="taskbar">
  <svg class="wall" viewBox="0 0 1366 30" preserveAspectRatio="none" aria-hidden="true"><path d="M0 0h1366v30H0z" fill="#c0a876"/><path d="M0 0h672q-4 14-5 30H0z" fill="url(#gTask)"/><path d="M672 0h82q3 12 5 30h-92q1-16 5-30z" fill="#9d7f3b"/><path d="M1192 0h174v30h-88q-34-18-86-30z" fill="#bf932f"/><path d="M1192 0h58q48 12 76 30h-48q-34-18-86-30z" fill="#c89d38"/></svg>
  <div class="tasks">
    <button class="start" aria-label="Start"><svg viewBox="0 0 16 16"><path d="M1 3l6-.8v5.300H1zM8 2l7-1v6.500H8zM1 8.500h6v5.300L1 13zM8 8.500h7V15l-7-1z" fill="#fff"/></svg></button>
    <button aria-label="Internet Explorer"><svg viewBox="0 0 16 16"><path d="M13.500 10.500Q12 14 8.500 14 3 14 3 8.500T8.500 3q5.500 0 5.500 6H6" fill="none" stroke="#49b4ea" stroke-width="2.600"/><path d="M1 15q-1.500-4 4-9t10-4.500q1 1-.5 3.500" fill="none" stroke="#f5c83c" stroke-width="1.200"/></svg></button>
    <button class="run" aria-label="File Explorer"><svg viewBox="0 0 16 16"><path d="M0 2h6l1 2h8v10H0z" fill="#edc963"/><path d="M1 5h14v8H1z" fill="#fbe9a5"/><path d="M3 15V9q0-1.500 1.500-1.500h7Q13 7.500 13 9v6h-3v-4H6v4z" fill="#6fc3ec" stroke="#3a94c8" stroke-width=".6"/></svg></button>
    <button aria-label="Store"><svg viewBox="0 0 16 16"><path d="M0 0h16v16H0z" fill="#109010"/><path d="M2.500 5h11v8.500h-11z" fill="#fff"/><path d="M6 5V3h4.500v2" fill="none" stroke="#fff"/><path d="M5 7h2.500v2H5zM8.500 7H11v2H8.500zM5 10h2.500v2H5zM8.500 10H11v2H8.500z" fill="#109010"/></svg></button>
    <button aria-label="Nox"><svg viewBox="0 0 16 16"><path d="M8 0l7 4v8l-7 4-7-4V4z" fill="#24272e"/><text x="8" y="10" text-anchor="middle" font-size="7" fill="#39a5db">nox</text></svg></button>
    <button aria-label="Word"><svg viewBox="0 0 16 16"><path d="M7 2h9v12H7z" fill="#fff" stroke="#2a579a" stroke-width=".8"/><path d="M10 5h5M10 7.500h5M10 10h5" stroke="#2a579a"/><path d="M0 1l9.500-1v16L0 15z" fill="#2a579a"/><text x="4.700" y="11" text-anchor="middle" font-weight="bold" font-size="8" fill="#fff">W</text></svg></button>
    <button aria-label="Chrome"><svg viewBox="0 0 16 16"><circle cx="8" cy="8" r="7" fill="#f2cb2f"/><path d="M8 8L2 4.300A7 7 0 0 1 14.300 5H8z" fill="#dd4b3e"/><path d="M8 8L2 4.300A7 7 0 0 0 7 15l3.500-5z" fill="#3fa457"/><circle cx="8" cy="8" r="3.300" fill="#fff"/><circle cx="8" cy="8" r="2.500" fill="#4a86e8"/></svg></button>
    <button class="run" aria-label="Reader"><svg viewBox="0 0 16 16"><path d="M0 0h16v16H0z" fill="#d8412a"/><path d="M4 3v6q0 3 3 3.500V6M8 2.500L7 8l5 2V3" fill="none" stroke="#fff" stroke-width="1.700"/></svg></button>
    <button class="run stack" aria-label="Sublime Text"><svg viewBox="0 0 16 16"><rect width="16" height="16" rx="1" fill="#474747"/><path d="M12 3v3L6.500 7.500 12 9v2.500L4 14v-3l5-1.300L4 8V5z" fill="#f79a18"/></svg></button>
    <button class="run" aria-label="Paint"><svg viewBox="0 0 16 16"><path d="M1 9q0-5 6-5t6 5q0 6-6 5-2 0-2-2Q1 13 1 9z" fill="#dceefa" stroke="#5d8fb5" stroke-width=".7"/><circle cx="4" cy="8" r="1.300" fill="#4a8de0"/><circle cx="7.500" cy="6" r="1.300" fill="#57b445"/><circle cx="10" cy="8.500" r="1.300" fill="#e3412f"/><circle cx="9" cy="11.500" r="1.300" fill="#f2bc2b"/><path d="M13.500 15l-1-8 1-6 2 6z" fill="#d57b28"/></svg></button>
    <button class="run active" aria-label="QGIS"><svg><use href="#qgis"/></svg></button>
  </div>
  <div class="tray">
    <svg viewBox="0 0 16 16"><path d="M4 10h8L8 6z" fill="#fff" stroke="#765" stroke-width=".6"/></svg>
    <svg viewBox="0 0 16 16"><path d="M1.500 0v16" stroke="#fff" stroke-width="2"/><path d="M3 2q4-1.500 6 0t5 0v7q-3 1-5 0T3 9z" fill="#eee" stroke="#555" stroke-width=".7"/><circle cx="11" cy="11" r="4.500" fill="#d8302b" stroke="#a01c18" stroke-width=".6"/><path d="M9 9l4 4M13 9l-4 4" stroke="#fff" stroke-width="1.500"/></svg>
    <svg viewBox="0 0 16 16"><path d="M2 0v4M5 0v4M1 4h5v4H1zM3.500 8v7" fill="#fff" stroke="#fff" stroke-width="1.400"/><rect x="8" y="2.500" width="7" height="12.500" fill="#5b5040" stroke="#fff" stroke-width="1.500"/><path d="M10 1h3v1.500h-3z" fill="#fff"/><path d="M10 6h3v7h-3z" fill="#fff"/></svg>
    <svg viewBox="0 0 16 16"><path d="M0 5h3l4-4v14l-4-4H0z" fill="#fff" stroke="#554" stroke-width=".6"/><circle cx="11.500" cy="11.500" r="3.600" fill="#fff" stroke="#d8302b" stroke-width="1.600"/><path d="M9 9l5 5" stroke="#d8302b" stroke-width="1.600"/></svg>
    <svg viewBox="0 0 16 16"><path d="M.500 12h2v2h-2zM3.500 10h2v4h-2zM6.500 8h2v6h-2zM9.500 5h2v9h-2z" fill="#fff" stroke="#554" stroke-width=".6"/><path d="M12.500 2h3v12h-3z" fill="#998" stroke="#fff" stroke-width=".7"/></svg>
    <time>23:08</time>
  </div>
</footer>
</body>
</html>
```
FILE: styles.css
```css
* { box-sizing: border-box; }
body {
  margin: 0;
  height: 100vh;
  display: flex;
  flex-direction: column;
  overflow: hidden;
  background: #efefef;
  color: #000;
  font: 11px/14px Roboto, "DejaVu Sans", sans-serif;
}
button, input, select { font: inherit; color: inherit; margin: 0; }
button { border: 0; padding: 0; background: none; }
svg { display: block; flex: none; }
.paints { position: absolute; width: 0; height: 0; }
.symbols { display: none; }
.i16 { width: 16px; height: 16px; }

.titlebar {
  display: flex;
  position: relative;
  flex: none;
  height: 23px;
  padding: 3px 18px 0 2px;
  background: #f0c869;
  border-bottom: 1px solid #c9a65a;
}
.titlebar h1 {
  flex: 1;
  margin: 0;
  text-align: center;
  font: 14px/18px "Open Sans", sans-serif;
  color: #322a18;
}
.winbtns { display: flex; position: absolute; top: 0; right: 3px; }
.wb { width: 26px; height: 19px; display: flex; align-items: center; justify-content: center; }
.wb svg { width: 10px; height: 10px; }
.wclose { width: 45px; background: #c75050; }

.menubar {
  display: flex;
  flex: none;
  gap: 15px;
  height: 20px;
  padding-left: 7px;
  background: #f5f6f8;
  border-bottom: 1px solid #e3e4e6;
}
.menubar u { text-underline-offset: 2px; }

.toolrow {
  display: flex;
  flex: none;
  height: 34px;
  border-top: 1px solid #fff;
  border-bottom: 1px solid #b9b9b9;
}
.toolrow:first-of-type { height: 33px; }
.toolbar {
  display: flex;
  align-items: flex-start;
  border-right: 1px solid #b5b5b5;
  box-shadow: 1px 0 #fff;
  padding-right: 2px;
}
.toolbar::before {
  content: "";
  width: 4px;
  height: 28px;
  margin: 2px 1px 0 4px;
  background: radial-gradient(circle at 1px 1px, #b9b9b9 1px, transparent 1px) 0 0 / 4px 4px;
}
.toolbar.last { border: 0; box-shadow: none; }
.toolbar button {
  width: 31px;
  height: 30px;
  display: flex;
  align-items: center;
  justify-content: center;
  border: 1px solid transparent;
}
.toolbar svg { width: 24px; height: 24px; }
.toolbar .on { background: #cce0f3; border-color: #7eb0e2; }
.toolbar .drop { width: 43px; gap: 5px; }
.drop::after {
  content: "";
  border: 4px solid transparent;
  border-top-color: #111;
  border-bottom: 0;
}
.drop.dim::after { border-top-color: #777; }

.work { display: flex; flex: 1; min-height: 0; }
.docks { width: 294px; flex: none; display: flex; flex-direction: column; gap: 5px; padding-top: 1px; }
.dock { display: flex; flex-direction: column; min-height: 0; }
.browser { flex: 328 1 0; }
.legend { flex: 267 1 0; }
.dock h2 {
  display: flex;
  align-items: center;
  gap: 6px;
  height: 19px;
  margin: 0;
  padding: 2px 3px 0;
  font: inherit;
  background: #dadada;
  border: 1px solid #b9b9b9;
}
.dock h2 button:first-of-type { margin-left: auto; }
.dock h2 svg { width: 10px; height: 10px; }
.docktools { display: flex; align-items: center; gap: 7px; height: 28px; padding: 2px 0 0 5px; flex: none; }
.docktools button { display: flex; align-items: center; gap: 4px; }
.docktools .drop { margin-left: 1px; }
.docktools svg { width: 16px; height: 16px; }
.treebox, .layerbox { flex: 1; min-height: 0; display: flex; background: #fff; border: 1px solid #828790; }
.tree { flex: 1; margin: 0; padding: 1px 0 0; list-style: none; overflow: hidden; }
.tree li { height: 20px; padding-left: 100px; display: flex; }
.tree .deep { padding-left: 160px; }
.tree span { display: flex; align-items: center; gap: 5px; padding: 0 7px 0 2px; border: 1px solid transparent; }
.tree svg { width: 16px; height: 16px; }
.tree .sel { background: #cbe8f6; border: 1px dotted #000; outline: 1px solid #26a0da; outline-offset: -1px; }
.scroll { width: 16px; background: #f0f0f0; display: flex; flex-direction: column; align-items: center; padding: 5px 0; }
.scroll svg { width: 8px; height: 8px; }
.track { flex: 1; width: 100%; display: flex; flex-direction: column; }
.track::before { content: ""; flex: 95; }
.track::after { content: ""; flex: 109; }
.thumb { flex: 47; margin-right: 1px; background: #cdcdcd; }
.layer {
  flex: 1;
  display: flex;
  align-items: center;
  height: 20px;
  margin-left: 20px;
  padding-left: 2px;
  background: #f7f7f7;
  border: 1px solid #dcdcdc;
}
.layer b { margin-left: 6px; text-decoration: underline; }
.linesym { width: 16px; height: 1px; margin-left: 6px; background: #8b8fd0; }
input[type="checkbox"] {
  appearance: none;
  width: 13px;
  height: 13px;
  border: 1px solid #666;
  background: #fff;
  display: flex;
  align-items: center;
  justify-content: center;
}
input[type="checkbox"]:checked::before {
  content: "";
  width: 4px;
  height: 8px;
  margin-bottom: 2px;
  border: solid #111;
  border-width: 0 2px 2px 0;
  transform: rotate(40deg);
}

.canvas { flex: 1; margin-left: 4px; border: 1px solid #828790; background: #fff; min-width: 0; }
.canvas svg { width: 100%; height: 100%; }

.status { display: flex; align-items: center; flex: none; height: 27px; padding: 1px 7px 0 4px; }
.locate { display: flex; align-items: center; width: 200px; height: 20px; padding-left: 8px; gap: 6px; background: #fff; border: 1px solid #ababab; }
.locate svg { width: 13px; height: 13px; }
.locate input { flex: 1; min-width: 0; padding: 0; border: 0; background: none; outline: 0; }
.locate input::placeholder { color: #777; opacity: 1; }
.msg { flex: 1; margin-left: 9px; }
.box { height: 20px; padding: 0 5px; border: 1px solid #ababab; background: #fff; }
.w-coordl { width: 57px; }
.w-coord { width: 74px; }
.extents { margin: 0 12px 0 3px; }
.extents svg { width: 16px; height: 16px; }
.w-scalel { width: 29px; }
.combo { position: relative; width: 78px; }
.combo select { width: 100%; padding: 0 4px; appearance: none; border-radius: 0; display: block; }
.combo svg { position: absolute; right: 4px; top: 6px; width: 8px; height: 8px; pointer-events: none; }
.lock { margin: 0 14px 0 5px; }
.lock svg { width: 12px; height: 16px; }
.w-magl { width: 48px; }
.spinbox { display: flex; align-items: center; height: 20px; background: #fff; border: 1px solid #ababab; padding-right: 1px; }
.spinbox input { flex: 1; min-width: 0; padding: 0 2px; border: 0; background: none; }
.spinbox svg { width: 14px; height: 18px; }
.w-mag { width: 82px; }
.w-rotl { width: 40px; margin-left: 8px; }
.w-rot { width: 80px; }
.render { display: flex; align-items: center; gap: 4px; width: 70px; margin-left: 6px; }
.crs { display: flex; align-items: center; gap: 3px; width: 74px; margin-left: 1px; }
.crs svg { width: 15px; height: 16px; }
.bubble { margin-left: 14px; }
.bubble svg { width: 16px; height: 16px; }

.taskbar { position: relative; flex: none; height: 30px; display: flex; justify-content: space-between; }
.wall { position: absolute; width: 100%; height: 100%; }
.tasks, .tray { position: relative; display: flex; align-items: center; }
.tasks { gap: 2px; }
.tasks button { width: 44px; height: 30px; display: flex; align-items: center; justify-content: center; border: 1px solid transparent; }
.tasks .start { width: 39px; }
.tasks svg { width: 16px; height: 16px; }
.tasks .run { background: rgba(255, 235, 200, 0.25); border-color: #8d6a2b; box-shadow: inset 0 0 0 1px #dcc18c; }
.tasks .stack { border-right: 5px double #dcc18c; }
.tasks .active { background: rgba(255, 245, 225, 0.5); box-shadow: inset 0 0 0 1px #fff; }
.tray { gap: 8px; padding-right: 32px; color: #fff; }
.tray svg { width: 16px; height: 16px; }
.tray time { width: 32px; margin-left: 23px; font-size: 12px; text-align: center; }
```
